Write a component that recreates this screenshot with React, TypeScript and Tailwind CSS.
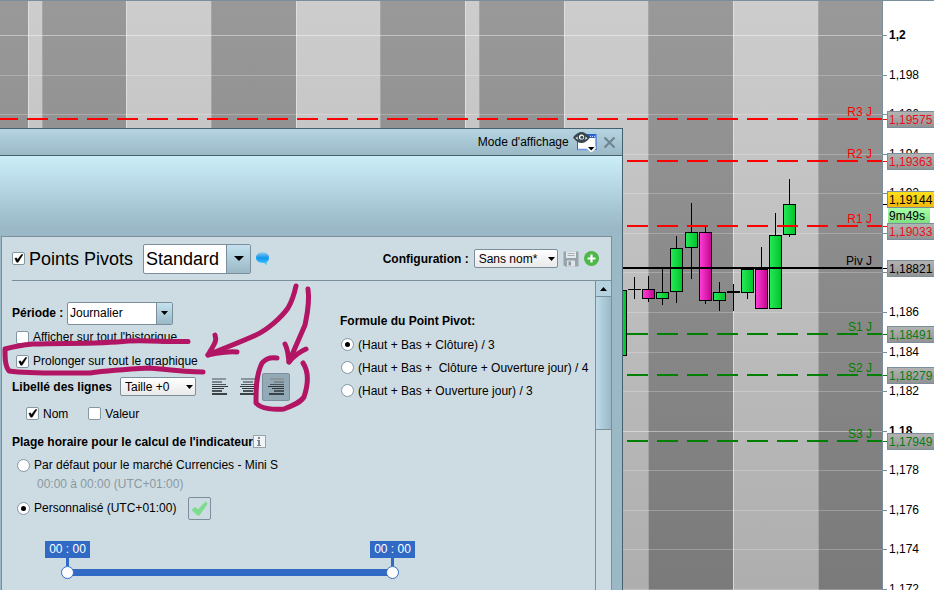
import { useState, type ReactNode } from "react";

/* ---------- chart data ---------- */

const BANDS = [28, 42, 126, 211, 296, 380, 465, 479, 564, 648, 733, 818, 882];

const GRID = [
  { y: 35, price: "1,2", bold: true },
  { y: 75, price: "1,198" },
  { y: 114, price: "1,196" },
  { y: 154, price: "1,194" },
  { y: 193, price: "1,192" },
  { y: 233 },
  { y: 272 },
  { y: 312, price: "1,186" },
  { y: 352, price: "1,184" },
  { y: 391, price: "1,182" },
  { y: 431, price: "1,18", bold: true },
  { y: 470, price: "1,178" },
  { y: 510, price: "1,176" },
  { y: 549, price: "1,174" },
  { y: 589, price: "1,172" },
];

const PIVOTS = [
  { name: "R3 J", y: 119, color: "#ff0000", tag: "#e8101c", price: "1,19575", tagTop: 111, solid: false },
  { name: "R2 J", y: 161, color: "#ff0000", tag: "#e8101c", price: "1,19363", tagTop: 153, solid: false },
  { name: "R1 J", y: 226, color: "#ff0000", tag: "#e8101c", price: "1,19033", tagTop: 223, solid: false },
  { name: "Piv J", y: 268, color: "#000000", tag: "#000000", price: "1,18821", tagTop: 260, solid: true },
  { name: "S1 J", y: 334, color: "#008000", tag: "#0b7a12", price: "1,18491", tagTop: 326, solid: false },
  { name: "S2 J", y: 375, color: "#008000", tag: "#0b7a12", price: "1,18279", tagTop: 367, solid: false },
  { name: "S3 J", y: 441, color: "#008000", tag: "#0b7a12", price: "1,17949", tagTop: 433, solid: false },
];

type Candle = { x: number; top: number; bottom: number; high: number; low: number; kind: "up" | "down" | "doji" };

const CANDLES: Candle[] = [
  { x: 614, top: 290, bottom: 356, high: 290, low: 356, kind: "up" },
  { x: 628, top: 289, bottom: 290, high: 277, low: 299, kind: "doji" },
  { x: 642, top: 289, bottom: 299, high: 276, low: 302, kind: "down" },
  { x: 656, top: 292, bottom: 299, high: 268, low: 305, kind: "up" },
  { x: 670, top: 248, bottom: 292, high: 236, low: 303, kind: "up" },
  { x: 685, top: 232, bottom: 248, high: 203, low: 279, kind: "up" },
  { x: 699, top: 232, bottom: 301, high: 227, low: 304, kind: "down" },
  { x: 713, top: 292, bottom: 301, high: 282, low: 311, kind: "up" },
  { x: 727, top: 291, bottom: 293, high: 284, low: 311, kind: "doji" },
  { x: 741, top: 269, bottom: 293, high: 269, low: 299, kind: "up" },
  { x: 755, top: 269, bottom: 309, high: 247, low: 309, kind: "down" },
  { x: 769, top: 235, bottom: 309, high: 213, low: 309, kind: "up" },
  { x: 783, top: 204, bottom: 235, high: 179, low: 237, kind: "up" },
];

function Chart() {
  return (
    <svg viewBox="0 0 934 590" preserveAspectRatio="xMaxYMin slice" className="block h-full w-full text-[12px]" role="img" aria-label="Graphique avec points pivots">
      <defs>
        <linearGradient id="dark" x1="0" y1="0" x2="0" y2="1">
          <stop offset="0" stopColor="#999999" />
          <stop offset="1" stopColor="#7a7a7a" />
        </linearGradient>
        <linearGradient id="light" x1="0" y1="0" x2="0" y2="1">
          <stop offset="0" stopColor="#cdcdcd" />
          <stop offset="1" stopColor="#aeaeae" />
        </linearGradient>
        <linearGradient id="tag" x1="0" y1="0" x2="0" y2="1">
          <stop offset="0" stopColor="#b4b4b4" />
          <stop offset="1" stopColor="#929292" />
        </linearGradient>
        <linearGradient id="gold" x1="0" y1="0" x2="0" y2="1">
          <stop offset="0" stopColor="#ffe11a" />
          <stop offset="1" stopColor="#f2b70c" />
        </linearGradient>
        <linearGradient id="mint" x1="0" y1="0" x2="0" y2="1">
          <stop offset="0" stopColor="#a8ffa8" />
          <stop offset="1" stopColor="#7fe07f" />
        </linearGradient>
        <linearGradient id="up" x1="0" y1="0" x2="1" y2="0">
          <stop offset="0" stopColor="#28e858" />
          <stop offset="1" stopColor="#00c42a" />
        </linearGradient>
        <linearGradient id="down" x1="0" y1="0" x2="1" y2="0">
          <stop offset="0" stopColor="#ff3fd8" />
          <stop offset="1" stopColor="#c4058e" />
        </linearGradient>
      </defs>

      <rect width="934" height="590" fill="#ffffff" />
      {BANDS.map((right, i) => {
        const left = i === 0 ? 0 : BANDS[i - 1];
        const dark = i % 2 === 0;
        return (
          <g key={right}>
            <rect x={left} width={right - left} height="590" fill={dark ? "url(#dark)" : "url(#light)"} />
            {i > 0 && <rect x={left} width="1" height="590" fill={dark ? "#aaaaaa" : "#e2e2e2"} fillOpacity="0.8" />}
          </g>
        );
      })}
      {GRID.map((g) => (
        <rect key={g.y} x="0" y={g.y} width="882" height="1" fill="#ffffff" fillOpacity={g.bold ? 0.42 : 0.24} />
      ))}

      {CANDLES.map((c) => (
        <g key={c.x}>
          <rect x={c.x + 6} y={c.high} width="1" height={c.low - c.high} fill="#000000" />
          {c.kind === "doji" ? (
            <rect x={c.x} y={c.top} width="13" height={c.bottom - c.top} fill="#000000" />
          ) : (
            <rect x={c.x + 0.5} y={c.top + 0.5} width="12" height={c.bottom - c.top - 1} fill={c.kind === "up" ? "url(#up)" : "url(#down)"} stroke="#000000" />
          )}
        </g>
      ))}

      {PIVOTS.map((p) => (
        <g key={p.name}>
          <line x1="-3" x2="882" y1={p.y} y2={p.y} stroke={p.color} strokeWidth="2" strokeDasharray={p.solid ? undefined : "21 9"} />
          <text x="872" y={p.y - 3} textAnchor="end" fill={p.color}>{p.name}</text>
        </g>
      ))}

      <rect x="882" width="1" height="590" fill="#7a8f9b" />
      {GRID.map((g) => (
        <g key={g.y}>
          <rect x="883" y={g.y} width="4" height="1" fill="#7a8f9b" />
          {g.price && <text x="889" y={g.y + 4} fontWeight={g.bold ? 700 : 400}>{g.price}</text>}
        </g>
      ))}
      {PIVOTS.map((p) => (
        <g key={p.name}>
          <rect x="883" y={p.y} width="5" height="1" fill={p.color} />
          <rect x="887.5" y={p.tagTop + 0.5} width="60" height="16" fill="url(#tag)" stroke="#7a8f9b" />
          <text x="889" y={p.tagTop + 13} fill={p.tag}>{p.price}</text>
        </g>
      ))}
      <rect x="883" y="204" width="4" height="1" fill="#000000" />
      <rect x="887.5" y="191.5" width="60" height="16" fill="url(#gold)" stroke="#7a8f9b" />
      <text x="889" y="204">1,19144</text>
      <rect x="888" y="208" width="42" height="15" fill="url(#mint)" />
      <text x="889" y="220">9m49s</text>
      <rect width="934" height="1" fill="#7a8f9b" />
    </svg>
  );
}

/* ---------- form controls ---------- */

function Check({ label, checked = false, big = false }: { label: string; checked?: boolean; big?: boolean }) {
  return (
    <label className="flex items-center gap-1 whitespace-nowrap">
      <span className="relative grid size-[13px] shrink-0">
        <input type="checkbox" defaultChecked={checked} className="peer size-[13px] appearance-none rounded-[2px] border border-[#8397a2] bg-white" />
        <svg viewBox="0 0 13 13" className="pointer-events-none absolute inset-0 hidden size-[13px] peer-checked:block" aria-hidden="true">
          <path d="M2.8 6.4L4.4 5.8L5.6 7.4L9.4 2.6H11L6.2 10.2H4.6Z" fill="#000" stroke="#000" strokeWidth="0.4" />
        </svg>
      </span>
      <span className={big ? "text-lg leading-6" : ""}>{label}</span>
    </label>
  );
}

function Radio({ label, name, checked = false }: { label: string; name: string; checked?: boolean }) {
  return (
    <label className="flex items-center gap-1 whitespace-pre">
      <span className="relative grid size-[13px] shrink-0">
        <input type="radio" name={name} defaultChecked={checked} className="peer size-[13px] appearance-none rounded-full border border-[#8397a2] bg-white" />
        <span className="pointer-events-none absolute inset-0 m-auto hidden size-[5px] rounded-full bg-black peer-checked:block" />
      </span>
      <span>{label}</span>
    </label>
  );
}

function Triangle({ className }: { className: string }) {
  return (
    <svg viewBox="0 0 10 5" preserveAspectRatio="none" className={className} aria-hidden="true">
      <path d="M0 0H10L5 5Z" fill="#000" />
    </svg>
  );
}

function ComboBox({ id, value, label, large = false }: { id: string; value: string; label: string; large?: boolean }) {
  return (
    <span className={large ? "relative flex h-[30px] w-[108px]" : "relative flex h-[23px] w-[106px]"}>
      <select
        id={id}
        aria-label={label}
        className={
          large
            ? "size-full appearance-none rounded-[2px] border border-[#7a8f9b] bg-white pl-[2px] text-lg leading-6"
            : "size-full appearance-none rounded-[2px] border border-[#7a8f9b] bg-white pl-[2px]"
        }
      >
        <option>{value}</option>
      </select>
      <span
        className={
          large
            ? "pointer-events-none absolute inset-y-px right-px grid w-6 place-items-center border-l border-[#7a8f9b] bg-linear-to-b from-[#c3e2ee] to-[#9ab8c6]"
            : "pointer-events-none absolute inset-y-px right-px grid w-4 place-items-center border-l border-[#7a8f9b] bg-linear-to-b from-[#c3e2ee] to-[#9ab8c6]"
        }
      >
        <Triangle className={large ? "h-[5px] w-[10px]" : "h-1 w-[7px]"} />
      </span>
    </span>
  );
}

function SmallSelect({ id, value, label, wide = false }: { id: string; value: string; label: string; wide?: boolean }) {
  return (
    <span className={wide ? "relative flex h-[19px] w-[84px]" : "relative flex h-[19px] w-[76px]"}>
      <select
        id={id}
        aria-label={label}
        className="size-full appearance-none rounded-[2px] border border-[#7a8f9b] bg-linear-to-b from-white to-[#e9e9e9] pl-1"
      >
        <option>{value}</option>
      </select>
      <Triangle className="pointer-events-none absolute top-2 right-[3px] h-1 w-[7px]" />
    </span>
  );
}

const ALIGN_ROWS = [
  { y: 0, w: 14, h: 2, fill: "#8a969c" },
  { y: 3, w: 10, h: 2, fill: "#7b868c" },
  { y: 6, w: 14, h: 1, fill: "#4a5358" },
  { y: 8, w: 16, h: 1, fill: "#2e3438" },
  { y: 10, w: 12, h: 1, fill: "#2e3438" },
  { y: 12, w: 10, h: 2, fill: "#4a5358" },
  { y: 15, w: 15, h: 2, fill: "#3b4347" },
];

function AlignIcon({ side }: { side: "left" | "center" | "right" }) {
  return (
    <svg viewBox="0 0 17 17" className="size-[17px]" aria-hidden="true" shapeRendering="crispEdges">
      {ALIGN_ROWS.map((row) => {
        const x = side === "left" ? 0 : side === "right" ? 16 - row.w : Math.floor((16 - row.w) / 2);
        return <rect key={row.y} x={x} y={row.y} width={row.w} height={row.h} fill={row.fill} />;
      })}
    </svg>
  );
}

function AlignButton({ side, active = false, label }: { side: "left" | "center" | "right"; active?: boolean; label: string }) {
  return (
    <button
      type="button"
      aria-label={label}
      aria-pressed={active}
      className={
        active
          ? "grid size-7 place-items-center rounded-[2px] border border-[#7a8f9b] bg-[#93aab6]"
          : "grid size-7 place-items-center"
      }
    >
      <AlignIcon side={side} />
    </button>
  );
}

function HourFlag({ children }: { children: ReactNode }) {
  return (
    <span className="flex w-[45px] flex-col items-center">
      <span className="w-full bg-[#316ac5] text-center leading-[17px] text-white">{children}</span>
      <span className="h-2 w-[3px] bg-[#316ac5]" />
    </span>
  );
}

const THUMB =
  "pointer-events-none absolute inset-0 h-[13px] w-full appearance-none bg-transparent [&::-webkit-slider-thumb]:pointer-events-auto [&::-webkit-slider-thumb]:size-[13px] [&::-webkit-slider-thumb]:appearance-none [&::-webkit-slider-thumb]:rounded-full [&::-webkit-slider-thumb]:border [&::-webkit-slider-thumb]:border-[#316ac5] [&::-webkit-slider-thumb]:bg-white";

function HourRange() {
  const [start, setStart] = useState(0);
  const [end, setEnd] = useState(24);
  return (
    <div className="mt-[19px] ml-[33px] w-[370px]">
      <div className="flex justify-between">
        <HourFlag>00 : 00</HourFlag>
        <HourFlag>00 : 00</HourFlag>
      </div>
      <div className="relative mx-4 h-[13px] py-[3px]">
        <div className="mx-[6px] h-[7px] bg-[#316ac5]" />
        <input type="range" aria-label="Heure de début" min={0} max={24} value={start} onChange={(e) => setStart(Number(e.target.value))} className={THUMB} />
        <input type="range" aria-label="Heure de fin" min={0} max={24} value={end} onChange={(e) => setEnd(Number(e.target.value))} className={THUMB} />
      </div>
    </div>
  );
}

/* ---------- icons ---------- */

function DisplayModeIcon() {
  return (
    <svg viewBox="0 0 24 20" className="h-5 w-6" aria-hidden="true">
      <rect x="4.5" y="2.5" width="18.5" height="15" fill="#fff" stroke="#2a5fc9" />
      <rect x="5" y="3" width="17.5" height="3" fill="#2f66d0" />
      <path d="M17 4.5h1M19 4.5h1M21 4.5h1" stroke="#bcd2ff" />
      <path d="M4.5 17.5H16" stroke="#6d97e8" strokeWidth="1.5" />
      <path d="M0 5.5Q8.500 -5.500 17 5.500Q8.500 16.500 0 5.500Z" fill="#37474f" />
      <path d="M2.500 6Q8.500 0.500 14.500 6Q8.500 11.500 2.500 6Z" fill="#fff" />
      <circle cx="8.500" cy="5.300" r="4" fill="#37474f" />
      <circle cx="8.500" cy="5" r="2.600" fill="#fff" />
      <circle cx="8.800" cy="5.200" r="1.500" fill="#37474f" />
      <path d="M14 14H22.500V17L18.300 20.500L14 17Z" fill="#fff" />
      <path d="M15 15H21.500L18.200 18.500Z" fill="#000" />
    </svg>
  );
}

function BubbleIcon() {
  return (
    <svg viewBox="0 0 13 13" className="size-[13px]" aria-hidden="true">
      <defs>
        <linearGradient id="bubble" x1="0" y1="0" x2="0" y2="1">
          <stop offset="0" stopColor="#8ecdf3" />
          <stop offset="0.4" stopColor="#1e9bea" />
          <stop offset="0.55" stopColor="#0f9df5" />
          <stop offset="1" stopColor="#55d8ff" />
        </linearGradient>
      </defs>
      <path d="M6.500 0.200C10.300 0.200 13 2.500 13 5.600C13 7.900 12 9.500 10.600 10.200C10.500 11.200 10.700 12 11.200 12.900C9.800 12.700 8.900 11.900 8.200 10.900C3.500 11.600 0 9.200 0 5.600C0 2.500 2.700 0.200 6.500 0.200Z" fill="url(#bubble)" />
    </svg>
  );
}

function SaveIcon() {
  return (
    <svg viewBox="0 0 16 16" className="size-4" aria-hidden="true">
      <path d="M0.500 0.500H15.500V15.500H2L0.500 14Z" fill="#98a4ab" />
      <rect x="3" y="0.500" width="10" height="6.500" fill="#e4e9ec" />
      <path d="M4.500 2.500H11.500M4.500 4.500H11.500" stroke="#a8b2b8" />
      <rect x="4" y="9.500" width="8" height="6" fill="#dfe4e7" />
      <rect x="5.500" y="10.500" width="2.500" height="4" fill="#8b979e" />
    </svg>
  );
}

function PlusIcon() {
  return (
    <svg viewBox="0 0 15 15" className="size-[15px]" aria-hidden="true">
      <circle cx="7.500" cy="7.500" r="7.500" fill="#4db74a" />
      <path d="M7.500 3.500V11.500M3.500 7.500H11.500" stroke="#fff" strokeWidth="2.200" />
    </svg>
  );
}

/* ---------- settings window ---------- */

function SettingsWindow() {
  return (
    <section aria-label="Configuration de l'indicateur" className="absolute top-32 bottom-0 left-0 flex w-2/3 flex-col border-t border-r border-[#47606d]">
      <header className="flex h-[27px] shrink-0 items-center justify-end border-b border-[#47606d] bg-linear-to-b from-[#b6d5e2] to-[#9ab8c5] pr-[6px]">
        <button type="button" className="flex items-center gap-1">
          <span>Mode d'affichage</span>
          <DisplayModeIcon />
        </button>
        <button type="button" aria-label="Fermer" className="ml-[6px]">
          <svg viewBox="0 0 13 13" className="size-[13px]" aria-hidden="true">
            <path d="M1.500 1.500L11.500 11.500M11.500 1.500L1.500 11.500" stroke="#6f8591" strokeWidth="2.200" />
          </svg>
        </button>
      </header>

      <div className="flex min-h-0 flex-1 flex-col bg-[#9ab8c6]">
        <div className="h-20 shrink-0 bg-linear-to-b from-[#cbeef9] to-[#9ab8c6] to-90%" />
        <div className="mr-[10px] ml-px flex min-h-0 flex-1 flex-col border border-b-0 border-[#7a8f9b] bg-[#cddce3]">
          <div className="ml-[10px] flex h-11 shrink-0 items-center justify-between border-b border-[#7a8f9b] pr-3">
            <div className="flex items-center">
              <Check label="Points Pivots" checked big />
              <div className="ml-[10px] flex items-center gap-[5px]">
                <ComboBox id="type" label="Type de points pivots" value="Standard" large />
                <button type="button" aria-label="Aide"><BubbleIcon /></button>
              </div>
            </div>
            <div className="flex items-center gap-[5px]">
              <label htmlFor="config" className="font-bold">Configuration :</label>
              <SmallSelect id="config" label="Configuration" value="Sans nom*" wide />
              <button type="button" aria-label="Enregistrer"><SaveIcon /></button>
              <button type="button" aria-label="Ajouter"><PlusIcon /></button>
            </div>
          </div>

          <div className="flex min-h-0 flex-1">
            <form className="min-w-0 flex-1 overflow-hidden pl-[10px]">
              <div className="flex">
                <div className="w-[328px] shrink-0 pt-5">
                  <div className="flex h-6 items-center">
                    <label htmlFor="periode" className="w-[55px] font-bold">Période :</label>
                    <ComboBox id="periode" label="Période" value="Journalier" />
                  </div>
                  <div className="flex h-6 items-center pl-1"><Check label="Afficher sur tout l'historique" /></div>
                  <div className="flex h-6 items-center pl-1"><Check label="Prolonger sur tout le graphique" checked /></div>
                  <div className="flex h-[27px] items-center">
                    <label htmlFor="taille" className="w-[108px] font-bold">Libellé des lignes</label>
                    <SmallSelect id="taille" label="Taille du libellé" value="Taille +0" />
                    <div className="ml-[10px] flex">
                      <AlignButton side="left" label="Aligner à gauche" />
                      <AlignButton side="center" label="Centrer" />
                      <AlignButton side="right" label="Aligner à droite" active />
                    </div>
                  </div>
                  <div className="flex h-[27px] items-center gap-5 pl-[14px]">
                    <Check label="Nom" checked />
                    <Check label="Valeur" />
                  </div>
                  <div className="flex h-[29px] items-center">
                    <h2 className="font-bold whitespace-nowrap">Plage horaire pour le calcul de l'indicateur</h2>
                    <button type="button" aria-label="Information" className="grid size-[13px] place-items-center border border-[#97a4ab] bg-[#f1f4f5]">
                      <svg viewBox="0 0 5 9" className="h-[9px] w-[5px]" aria-hidden="true" shapeRendering="crispEdges">
                        <path d="M1 0H3V2H1ZM0 3H3V8H4V9H0V8H1V4H0Z" fill="#7c868c" />
                      </svg>
                    </button>
                  </div>
                  <div className="flex h-[18px] items-center pl-[5px]">
                    <Radio name="plage" label="Par défaut pour le marché Currencies - Mini S" />
                  </div>
                  <p className="h-5 pl-[25px] leading-5 text-[#8b989f]">00:00 à 00:00 (UTC+01:00)</p>
                  <div className="flex h-7 items-center gap-3 pl-[5px]">
                    <Radio name="plage" label="Personnalisé (UTC+01:00)" checked />
                    <button type="button" aria-label="Valider" className="grid size-[23px] place-items-center rounded-[2px] border border-[#7a8f9b]">
                      <svg viewBox="0 0 17 15" className="h-[15px] w-[17px]" aria-hidden="true">
                        <path d="M0.500 9L4 6L7 8.300L14.500 0.500L16.800 2.500L8.500 14.500L6.500 14.500Z" fill="#7fdc8f" />
                      </svg>
                    </button>
                  </div>
                </div>

                <div role="radiogroup" aria-labelledby="formule-title" className="min-w-0 flex-1 pt-[30px]">
                  <h2 id="formule-title" className="h-[22px] leading-5 font-bold">Formule du Point Pivot:</h2>
                  <div className="flex h-[23px] items-center pl-px"><Radio name="formule" label="(Haut + Bas + Clôture) / 3" checked /></div>
                  <div className="flex h-[23px] items-center pl-px"><Radio name="formule" label="(Haut + Bas +  Clôture + Ouverture jour) / 4" /></div>
                  <div className="flex h-[23px] items-center pl-px"><Radio name="formule" label="(Haut + Bas + Ouverture jour) / 3" /></div>
                </div>
              </div>
              <HourRange />
            </form>

            <div className="flex w-4 shrink-0 flex-col border-l border-[#7a8f9b]">
              <button type="button" aria-label="Défiler vers le haut" className="grid h-4 place-items-center border-b border-[#7a8f9b] bg-[#b4d2df]">
                <Triangle className="h-1 w-[7px] rotate-180" />
              </button>
              <div className="h-[133px] border-b border-[#7a8f9b] bg-linear-to-r from-[#bddbe8] to-[#9ab8c6]" />
            </div>
          </div>
        </div>
      </div>
    </section>
  );
}

/* Hand-drawn marks over the window */
function PenMarks() {
  return (
    <svg viewBox="0 0 320 420" className="pointer-events-none absolute top-0 left-0 h-[420px] w-[320px]" aria-hidden="true">
      <g fill="none" stroke="#b11564" strokeWidth="5" strokeLinecap="round" strokeLinejoin="round">
        <path d="M188 341.500C165 342 150 340 128 341C100 344 70 343 33 344C22 345 12 347 5 349C5 358 5 366 9 371C30 374 60 373 90 373C110 370 130 369 150 368C170 370 185 372 203 372" />
        <path d="M296 286C294 295 291 303 288 308C281 318 267 330 256 335C243 341 222 349 208 355" />
        <path d="M215 335C217 341 215 343 208 355C218 353 227 351 237 352" />
        <path d="M308 289C310 303 307 315 305 325C299 339 294 350 289 362" />
        <path d="M285 344C288 350 288 354 289 362C294 356 299 352 306 349" />
        <path d="M277 358C268 357 265 360 262 363C256 375 256 390 256 403C261 409 275 410 284 409C292 406 300 403 304 397C308 385 309 372 303 363" />
      </g>
    </svg>
  );
}

export default function App() {
  return (
    <main className="relative h-screen overflow-hidden font-['Liberation_Sans',Arial,sans-serif] text-[12px] leading-4 text-black">
      <Chart />
      <SettingsWindow />
      <PenMarks />
    </main>
  );
}
